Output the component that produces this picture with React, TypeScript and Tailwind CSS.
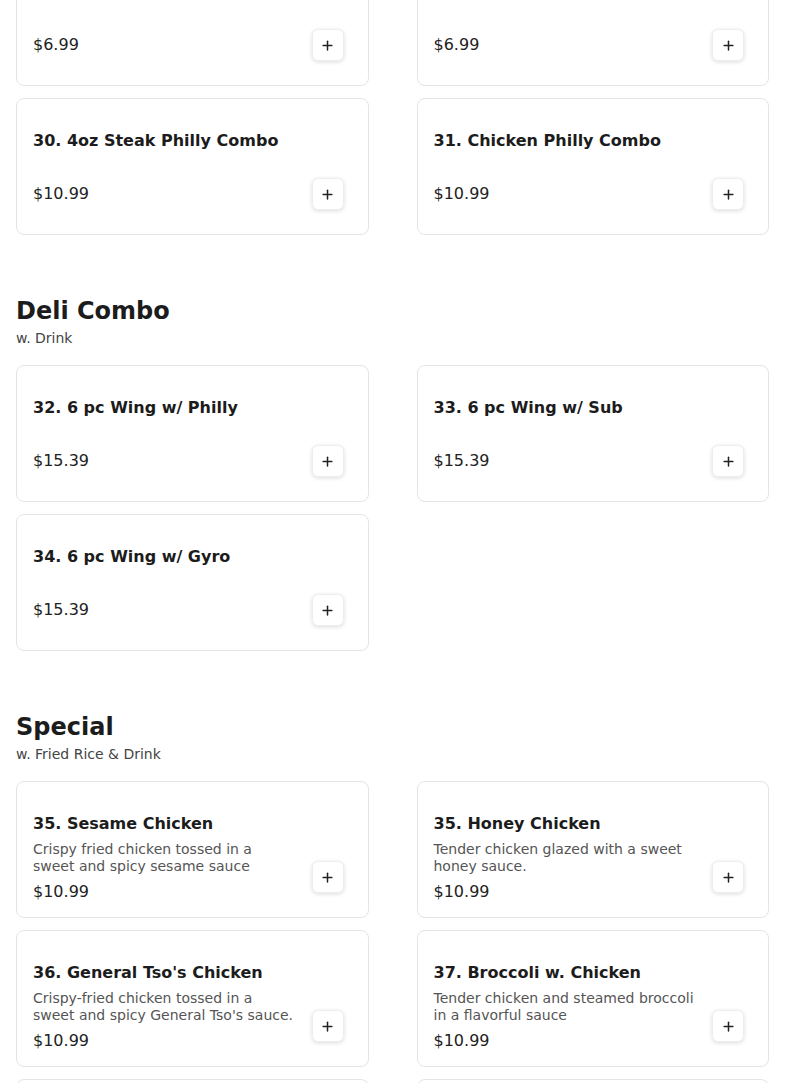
import React from 'react';
import { Plus } from 'lucide-react';

interface Item {
  name: string;
  price: string;
  description?: string;
}

interface Section {
  title?: string;
  subtitle?: string;
  items: Item[];
}

const sections: Section[] = [
  {
    items: [
      { name: '28. 4oz Steak Philly', price: '$6.99' },
      { name: '29. Chicken Philly', price: '$6.99' },
      { name: '30. 4oz Steak Philly Combo', price: '$10.99' },
      { name: '31. Chicken Philly Combo', price: '$10.99' }
    ]
  },
  {
    title: 'Deli Combo',
    subtitle: 'w. Drink',
    items: [
      { name: '32. 6 pc Wing w/ Philly', price: '$15.39' },
      { name: '33. 6 pc Wing w/ Sub', price: '$15.39' },
      { name: '34. 6 pc Wing w/ Gyro', price: '$15.39' }
    ]
  },
  {
    title: 'Special',
    subtitle: 'w. Fried Rice & Drink',
    items: [
      {
        name: '35. Sesame Chicken',
        price: '$10.99',
        description: 'Crispy fried chicken tossed in a sweet and spicy sesame sauce'
      },
      {
        name: '35. Honey Chicken',
        price: '$10.99',
        description: 'Tender chicken glazed with a sweet honey sauce.'
      },
      {
        name: "36. General Tso's Chicken",
        price: '$10.99',
        description: "Crispy-fried chicken tossed in a sweet and spicy General Tso's sauce."
      },
      {
        name: '37. Broccoli w. Chicken',
        price: '$10.99',
        description: 'Tender chicken and steamed broccoli in a flavorful sauce'
      },
      {
        name: '38. Orange Chicken',
        price: '$10.99',
        description: 'Crispy chicken in a tangy orange sauce'
      },
      {
        name: '39. Kung Pao Chicken',
        price: '$10.99',
        description: 'Spicy stir-fried chicken with peanuts and vegetables'
      }
    ]
  }
];

function MenuCard({ item }: { item: Item }) {
  return (
    <div className="flex h-[137px] items-end gap-4 rounded-lg border border-[#e4e4e4] bg-white pb-6 pl-4 pr-6 pt-[30px]">
      <div className="flex min-w-0 flex-1 flex-col self-stretch">
        <h3 className="text-base font-bold leading-6 text-[#1c1c1c]">{item.name}</h3>
        {item.description ? (
          <>
            <p className="mt-[5px] text-sm leading-[17px] text-[#555]">{item.description}</p>
            <span className="mt-[5px] text-base leading-6 text-[#222]">{item.price}</span>
          </>
        ) : (
          <span className="mt-[29px] text-base leading-6 text-[#222]">{item.price}</span>
        )}
      </div>
      <button className="flex h-8 w-8 shrink-0 items-center justify-center rounded-md border border-[#eeeeee] bg-white text-[#222] shadow-[0_1px_4px_rgba(0,0,0,0.14)]">
        <Plus size={15} strokeWidth={2.4} />
      </button>
    </div>
  );
}

export default function App() {
  return (
    <div className="min-h-screen bg-white px-4 font-['DejaVu_Sans',sans-serif]">
      <div className="-mt-[51px]">
        {sections.map((section, i) => (
          <section key={i} className={i > 0 ? 'mt-[60px]' : ''}>
            {section.title && (
              <div className="mb-[17px]">
                <h2 className="text-2xl font-bold leading-8 text-[#1c1c1c]">{section.title}</h2>
                <p className="mt-px text-sm leading-5 text-[#444]">{section.subtitle}</p>
              </div>
            )}
            <div className="grid grid-cols-2 gap-x-12 gap-y-3">
              {section.items.map((item) => (
                <MenuCard key={item.name} item={item} />
              ))}
            </div>
          </section>
        ))}
      </div>
    </div>
  );
}
